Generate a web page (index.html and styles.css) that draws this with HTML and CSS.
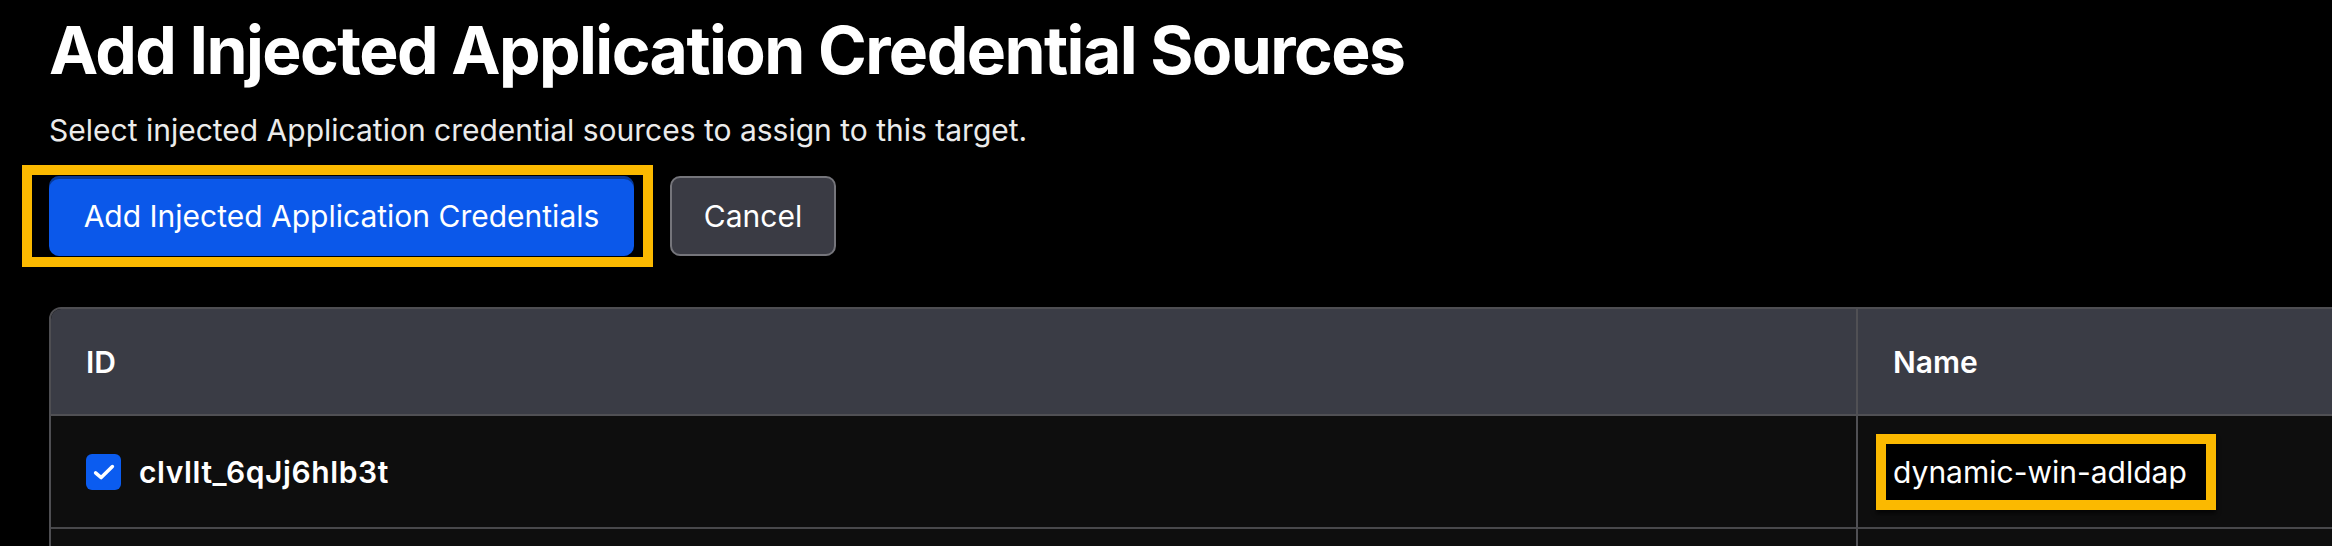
FILE: index.html
```html
<!DOCTYPE html>
<html lang="en">
<head>
    <meta charset="UTF-8">
    <meta name="viewport" content="width=device-width, initial-scale=1.0">
    <title>Add Injected Application Credential Sources</title>
    <link rel="stylesheet" href="styles.css">
</head>
<body>
    <main class="page">
        <h1 class="page-title">Add Injected Application Credential Sources</h1>
        <p class="page-lead">Select injected Application credential sources to assign to this target.</p>

        <div class="actions">
            <span class="callout callout-button">
                <button class="btn btn-primary" type="button">Add Injected Application Credentials</button>
            </span>
            <button class="btn btn-secondary" type="button">Cancel</button>
        </div>

        <table class="sources">
            <colgroup>
                <col class="col-id">
                <col class="col-name">
            </colgroup>
            <thead>
                <tr>
                    <th>ID</th>
                    <th>Name</th>
                </tr>
            </thead>
            <tbody>
                <tr>
                    <td>
                        <label class="source-id">
                            <span class="check">
                                <svg viewBox="0 0 16 16" width="28" height="28" aria-hidden="true">
                                    <path d="M3.2 8.5 L6.4 11.2 L12.8 4.9" fill="none" stroke="#fff" stroke-width="2" stroke-linecap="round" stroke-linejoin="round"/>
                                </svg>
                            </span>
                            clvllt_6qJj6hlb3t
                        </label>
                    </td>
                    <td><span class="callout callout-text">dynamic-win-adldap</span></td>
                </tr>
                <tr class="row-empty">
                    <td></td>
                    <td></td>
                </tr>
            </tbody>
        </table>
    </main>
</body>
</html>
```

FILE: styles.css
```css
html, body {
    overflow: hidden;
}

body {
    margin: 0;
    background: #000;
    color: #fff;
    font-family: Inter, "Noto Sans", "Liberation Sans", sans-serif;
}

.page {
    padding: 10px 0 0 49px;
}

.page-title {
    margin: 0;
    font-size: 66px;
    line-height: 80px;
    font-weight: 700;
    letter-spacing: -1.55px;
}

.page-lead {
    margin: 21px 0 0;
    font-size: 30px;
    line-height: 38px;
    color: #ebebeb;
}

.actions {
    display: flex;
    align-items: center;
    gap: 36px;
    margin-top: 27px;
}

.btn {
    height: 80px;
    padding: 0;
    border-radius: 10px;
    font-family: inherit;
    font-size: 30px;
    color: #fff;
    cursor: pointer;
}

.btn-primary {
    border: none;
    background: #0b58ea;
    box-shadow: inset 0 3px 0 rgba(0, 0, 0, 0.35);
    width: 585px;
}

.btn-secondary {
    background: #3a3b44;
    border: 2px solid #75757b;
    width: 166px;
}

/* yellow annotation frames drawn over the screenshot */
.callout {
    position: relative;
    display: inline-block;
    z-index: 0;
}

.callout::before {
    content: "";
    position: absolute;
    border: 10px solid #fbb900;
    z-index: -1;
}

.callout-button::before {
    top: -11px;
    bottom: -11px;
    left: -27px;
    right: -19px;
    background: #000;
}

.callout-text::before {
    top: -20px;
    bottom: -20px;
    left: -17px;
    right: -29px;
    background: #000;
    box-shadow: 0 4px 4px rgba(0, 0, 0, 0.6);
}

.sources {
    margin-top: 51px;
    width: 2700px;
    table-layout: fixed;
    border-collapse: separate;
    border-spacing: 0;
    border: 2px solid #4e4e52;
    border-top-left-radius: 12px;
    overflow: hidden;
}

.col-id {
    width: 1805px;
}

.sources th,
.sources td {
    text-align: left;
    font-size: 30px;
    line-height: 36px;
    padding: 0 0 0 35px;
}

.sources th {
    height: 105px;
    background: #3a3c45;
    font-weight: 600;
    border-bottom: 2px solid #505054;
}

.sources td {
    height: 111px;
    background: #0e0e0e;
    border-bottom: 2px solid #48484b;
}

.sources th + th,
.sources td + td {
    border-left: 2px solid #505054;
}

.source-id {
    display: flex;
    align-items: center;
    gap: 18px;
    font-weight: 600;
    letter-spacing: 0.6px;
}

.check {
    display: flex;
    align-items: center;
    justify-content: center;
    width: 35px;
    height: 36px;
    border-radius: 6px;
    background: #0b5cf0;
}
```
